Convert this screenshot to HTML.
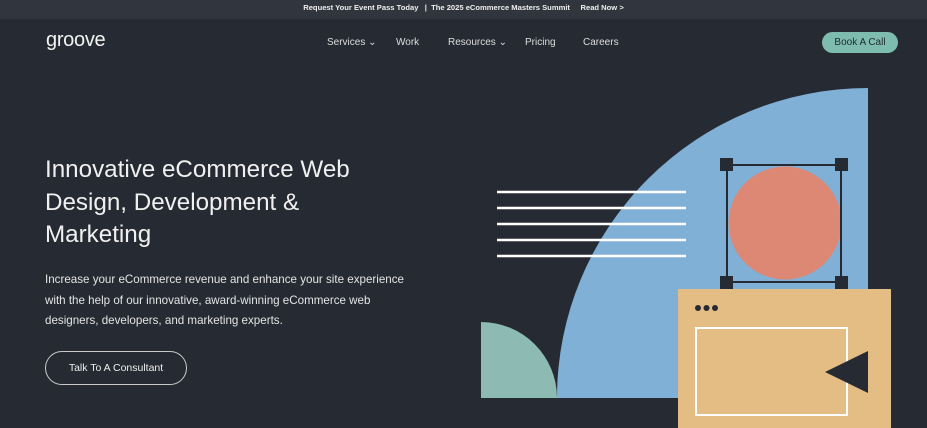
<!DOCTYPE html>
<html><head><meta charset="utf-8"><style>
*{margin:0;padding:0;box-sizing:border-box}
body{width:927px;height:428px;overflow:hidden;background:#262b33;font-family:"Liberation Sans",sans-serif;color:#fff;position:relative}
.top{position:absolute;left:0;top:0;width:927px;height:19px;background:#30353e;font-size:7.6px;font-weight:bold;text-align:center;line-height:16px;color:#eee}
.logo{position:absolute;left:46px;top:29px;font-size:20px;letter-spacing:-0.3px;color:#f2f2f2}
.nav{position:absolute;top:37px;font-size:10px;color:#ddd}
.book{position:absolute;left:822px;top:32px;width:76px;height:21px;border-radius:11px;background:#7fbcb0;color:#1f2a2c;font-size:10px;text-align:center;line-height:21px}
h1{position:absolute;left:45px;top:154px;font-size:24.2px;font-weight:normal;line-height:32.5px;color:#f0f0f0;white-space:nowrap}
p{position:absolute;left:45px;top:270px;font-size:11.6px;line-height:20.5px;color:#e4e4e4;white-space:nowrap}
.btn{position:absolute;left:45px;top:351px;width:142px;height:34px;border:1px solid #c9c9c9;border-radius:17px;font-size:10.5px;text-align:center;line-height:32px;color:#eee}
svg{position:absolute;left:0;top:0}
</style></head><body>
<div class="top">Request Your Event Pass Today &nbsp; | &nbsp;The 2025 eCommerce Masters Summit &nbsp;&nbsp;&nbsp; Read Now &gt;</div>
<div class="logo">groove</div>
<div class="nav" style="left:327px">Services ⌄</div>
<div class="nav" style="left:396px">Work</div>
<div class="nav" style="left:448px">Resources ⌄</div>
<div class="nav" style="left:525px">Pricing</div>
<div class="nav" style="left:583px">Careers</div>
<div class="book">Book A Call</div>
<h1>Innovative eCommerce Web<br>Design, Development &amp;<br>Marketing</h1>
<p>Increase your eCommerce revenue and enhance your site experience<br>with the help of our innovative, award-winning eCommerce web<br>designers, developers, and marketing experts.</p>
<div class="btn">Talk To A Consultant</div>
<svg width="927" height="428">
<path d="M557 398 A311 310 0 0 1 868 88 L868 398 Z" fill="#80b0d6"/>
<path d="M481 398 L481 322 A76 76 0 0 1 557 398 Z" fill="#8dbab2"/>
<g stroke="#fff" stroke-width="2.5">
<line x1="497" y1="192" x2="686" y2="192"/><line x1="497" y1="208" x2="686" y2="208"/><line x1="497" y1="224" x2="686" y2="224"/><line x1="497" y1="240" x2="686" y2="240"/><line x1="497" y1="256" x2="686" y2="256"/>
</g>
<circle cx="785" cy="223" r="56.5" fill="#dd8775"/>
<rect x="727" y="165" width="114" height="117" fill="none" stroke="#262b33" stroke-width="2"/>
<g fill="#262b33"><rect x="720" y="158" width="13" height="13"/><rect x="835" y="158" width="13" height="13"/><rect x="720" y="276" width="13" height="13"/><rect x="835" y="276" width="13" height="13"/></g>
<rect x="678" y="289" width="213" height="140" fill="#e3bd83"/>
<g fill="#262b33"><circle cx="698" cy="308" r="3"/><circle cx="706.5" cy="308" r="3"/><circle cx="715" cy="308" r="3"/></g>
<rect x="696" y="328" width="151" height="87" fill="none" stroke="#fff" stroke-width="2"/>
<path d="M825 372 L868 351 L868 393 Z" fill="#262b33"/>
</svg>
</body></html>
